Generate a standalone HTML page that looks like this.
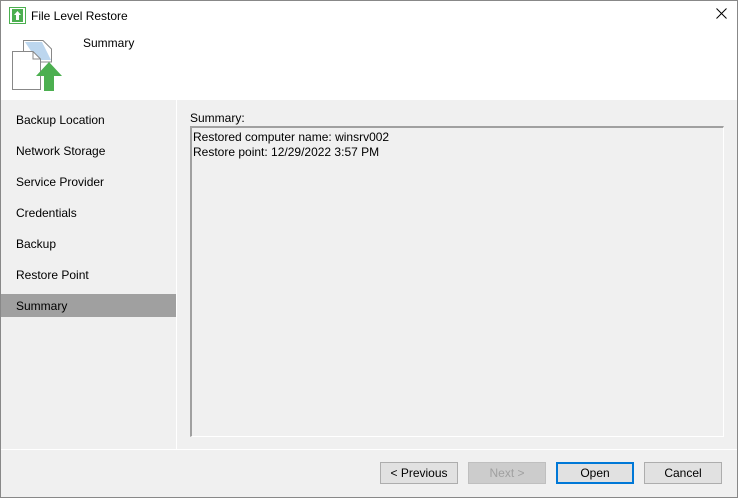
<!DOCTYPE html>
<html><head><style>
body{margin:0;width:738px;height:498px;position:relative;background:#f0f0f0;font-family:"Liberation Sans",sans-serif;font-size:12px;color:#000;overflow:hidden}
.a{position:absolute}
.btn{position:absolute;top:462px;width:78px;height:22px;border:1px solid #adadad;background:#e1e1e1;box-sizing:border-box;text-align:center;line-height:21px;font-size:12px}
.nav{position:absolute;left:16px;font-size:12px}
</style></head><body>
<div class="a" style="left:0;top:0;width:738px;height:100px;background:#fff"></div>
<div class="a" style="left:0;top:0;width:1px;height:498px;background:#888"></div>
<div class="a" style="left:737px;top:0;width:1px;height:498px;background:#888"></div>
<div class="a" style="left:0;top:497px;width:738px;height:1px;background:#888"></div>
<div class="a" style="left:0;top:0;width:738px;height:1px;background:#888"></div>
<svg class="a" style="left:9px;top:7px" width="18" height="18"><rect x="0.5" y="0.5" width="16" height="16" fill="#fff" stroke="#4caf50"/><rect x="3" y="2" width="11" height="13" fill="#4caf50"/><path d="M8.5 4 L12 8 H10 V13 H7 V8 H5 Z" fill="#fff"/></svg>
<div class="a" style="left:31px;top:9px;font-size:12px">File Level Restore</div>
<svg class="a" style="left:716px;top:8px" width="11" height="11"><path d="M0.5 0.5 L10.5 10.5 M10.5 0.5 L0.5 10.5" stroke="#000" stroke-width="1"/></svg>
<svg class="a" style="left:11px;top:38px" width="56" height="56"><path d="M12.5 2.5 H32 L40.5 11 V24 H12.5 Z" fill="#fff" stroke="#888"/><path d="M14 4 H31 L40 22 H26 Z" fill="#bcd6ee"/><path d="M1.5 13.5 H22 L29.5 21 V51.5 H1.5 Z" fill="#fff" stroke="#888"/><path d="M22 13.5 V21 H29.5" fill="none" stroke="#888"/><path d="M38 24 L51 38 H43 V53 H33 V38 H25 Z" fill="#4caf50"/></svg>
<div class="a" style="left:83px;top:36px">Summary</div>
<div class="a" style="left:1px;top:100px;width:175px;height:349px;background:#f0f0f0"></div>
<div class="a" style="left:176px;top:100px;width:1px;height:349px;background:#fff"></div>
<div class="a" style="left:1px;top:294px;width:175px;height:23px;background:#a0a0a0"></div>
<div class="nav" style="top:113px">Backup Location</div>
<div class="nav" style="top:144px">Network Storage</div>
<div class="nav" style="top:175px">Service Provider</div>
<div class="nav" style="top:206px">Credentials</div>
<div class="nav" style="top:237px">Backup</div>
<div class="nav" style="top:268px">Restore Point</div>
<div class="nav" style="top:299px">Summary</div>
<div class="a" style="left:190px;top:111px">Summary:</div>
<div class="a" style="left:190px;top:126px;width:534px;height:311px;border-top:2px solid #a0a0a0;border-left:2px solid #a0a0a0;border-right:1px solid #fff;border-bottom:1px solid #fff;box-sizing:border-box"></div>
<div class="a" style="left:193px;top:130px;line-height:15px">Restored computer name: winsrv002<br>Restore point: 12/29/2022 3:57 PM</div>
<div class="a" style="left:1px;top:449px;width:736px;height:1px;background:#fff"></div>
<div class="btn" style="left:380px">&lt; Previous</div>
<div class="btn" style="left:468px;background:#cccccc;border-color:#bfbfbf;color:#a0a0a0">Next &gt;</div>
<div class="btn" style="left:556px;border:2px solid #0078d7;line-height:19px">Open</div>
<div class="btn" style="left:644px">Cancel</div>
</body></html>
